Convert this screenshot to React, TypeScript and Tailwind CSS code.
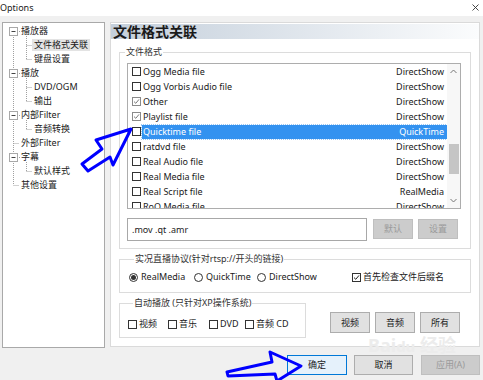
import React from "react";

const FONT = "font-['Noto_Sans','Noto_Sans_CJK_SC',sans-serif]";

function Check({ checked = false, dim = false }: { checked?: boolean; dim?: boolean }) {
  return (
    <span
      className={`relative inline-block w-[9px] h-[9px] shrink-0 border bg-white ${
        dim ? "border-[#8a8a8a]" : "border-[#333333]"
      }`}
    >
      {checked && (
        <svg className="absolute left-0 top-0" width="7" height="7" viewBox="0 0 7 7">
          <path
            d="M1 3.6 L2.8 5.3 L6 1.4"
            fill="none"
            stroke={dim ? "#7a7a7a" : "#222"}
            strokeWidth="1"
          />
        </svg>
      )}
    </span>
  );
}

function Radio({ on = false }: { on?: boolean }) {
  return (
    <span className="relative inline-flex w-[9px] h-[9px] shrink-0 rounded-full border border-[#333333] bg-white items-center justify-center">
      {on && <span className="w-[5px] h-[5px] rounded-full bg-[#333333]" />}
    </span>
  );
}

const rows: { name: string; type: string; checked?: boolean; sel?: boolean }[] = [
  { name: "Ogg Media file", type: "DirectShow" },
  { name: "Ogg Vorbis Audio file", type: "DirectShow" },
  { name: "Other", type: "DirectShow", checked: true },
  { name: "Playlist file", type: "DirectShow", checked: true },
  { name: "Quicktime file", type: "QuickTime", sel: true },
  { name: "ratdvd file", type: "DirectShow" },
  { name: "Real Audio file", type: "DirectShow" },
  { name: "Real Media file", type: "DirectShow" },
  { name: "Real Script file", type: "RealMedia" },
  { name: "RoQ Media file", type: "DirectShow" },
];

const tree: { label: string; child?: boolean; sel?: boolean }[] = [
  { label: "播放器" },
  { label: "文件格式关联", child: true, sel: true },
  { label: "键盘设置", child: true },
  { label: "播放" },
  { label: "DVD/OGM", child: true },
  { label: "输出", child: true },
  { label: "内部Filter" },
  { label: "音频转换", child: true },
  { label: "外部Filter" },
  { label: "字幕" },
  { label: "默认样式", child: true },
  { label: "其他设置" },
];

function TreeLines() {
  const cy = (i: number) => 8 + 14 * i;
  const boxes = [0, 3, 6, 9];
  const leaves = [8, 11];
  const childGroups: [number, number][] = [
    [0, 2],
    [3, 5],
    [6, 7],
    [9, 10],
  ];
  const dash = "1 1";
  const c = "#a0a0a0";
  return (
    <svg className="absolute left-0 top-0 pointer-events-none" width="101" height="200">
      <line x1="10.5" y1={cy(0)} x2="10.5" y2={cy(11)} stroke={c} strokeDasharray={dash} />
      {leaves.map((i) => (
        <line key={"l" + i} x1="10.5" y1={cy(i) + 0.5} x2="16" y2={cy(i) + 0.5} stroke={c} strokeDasharray={dash} />
      ))}
      {childGroups.map(([p, last]) => (
        <g key={"g" + p}>
          <line x1="23.5" y1={cy(p) + 5} x2="23.5" y2={cy(last)} stroke={c} strokeDasharray={dash} />
          {Array.from({ length: last - p }, (_, k) => p + 1 + k).map((i) => (
            <line key={"c" + i} x1="23.5" y1={cy(i) + 0.5} x2="29" y2={cy(i) + 0.5} stroke={c} strokeDasharray={dash} />
          ))}
        </g>
      ))}
      {boxes.map((i) => (
        <g key={"b" + i}>
          <line x1="14" y1={cy(i) + 0.5} x2="17" y2={cy(i) + 0.5} stroke={c} strokeDasharray={dash} />
          <rect x="6.5" y={cy(i) - 3.5} width="8" height="8" fill="#fff" stroke="#a8a8a8" />
          <line x1="8.5" y1={cy(i) + 0.5} x2="12.5" y2={cy(i) + 0.5} stroke="#444" />
        </g>
      ))}
    </svg>
  );
}

function Btn({ children, w, disabled = false }: { children: React.ReactNode; w: string; disabled?: boolean }) {
  return (
    <div
      className={`${w} flex items-center justify-center border text-[9px] ${
        disabled
          ? "bg-[#cccccc] border-[#bfbfbf] text-[#9a9a9a]"
          : "bg-[#e1e1e1] border-[#adadad] text-[#1a1a1a]"
      }`}
    >
      {children}
    </div>
  );
}

export default function App() {
  return (
    <div className={`relative w-[483px] h-[380px] bg-[#f0f0f0] overflow-hidden text-[#1a1a1a] ${FONT}`}>
      {/* title bar */}
      <div className="h-[16px] bg-white flex items-center justify-between pr-[4px]">
        <span className="text-[9px] leading-none pl-[0px] -mt-[2px]">Options</span>
        <svg width="7" height="7" viewBox="0 0 7 7" className="-mt-[2px]">
          <path d="M0.5 0.5 L6.5 6.5 M6.5 0.5 L0.5 6.5" stroke="#333" strokeWidth="0.9" />
        </svg>
      </div>

      {/* main area */}
      <div className="flex items-start">
        {/* tree */}
        <div className="relative ml-[2px] mt-[6px] w-[103px] h-[326px] bg-white border border-[#a9a9a9]">
          <TreeLines />
          <div className="relative pt-[1px]">
            {tree.map((t) => (
              <div key={t.label} className={`h-[14px] flex items-center text-[9px] ${t.child ? "pl-[29px]" : "pl-[16px]"}`}>
                <span className={`px-[2px] leading-[12px] ${t.sel ? "bg-[#e3e3e3]" : ""}`}>{t.label}</span>
              </div>
            ))}
          </div>
        </div>

        {/* right panel */}
        <div className="ml-[5px] mt-[6px] w-[370px] h-[325px] bg-white border border-[#dadada] flex flex-col">
          <div className="mt-[1px] h-[15px] bg-linear-to-r from-[#c4cfdb] to-[#fbfcfd] pl-[2px] text-[14px] font-bold leading-[15px]">
            文件格式关联
          </div>

          {/* group 1 */}
          <fieldset className="mt-[7px] mx-[8px] border border-[#dcdcdc] pb-[7px]">
            <legend className="ml-[5px] px-[1px] text-[9px] leading-[12px] text-[#333]">文件格式</legend>
            <div className="ml-[7px] mt-[5px] w-[334px] h-[146px] border border-[#adadad] flex overflow-hidden">
              <div className="flex-1 flex flex-col">
                {rows.map((r) => (
                  <div key={r.name} className="h-[15px] shrink-0 flex items-center pl-[4px]">
                    <Check checked={r.checked} dim={r.checked} />
                    <div
                      className={`ml-[1px] flex-1 h-[14px] flex items-center justify-between pl-[1px] pr-[3px] text-[9px] ${
                        r.sel ? "bg-[#3392f0] text-white outline outline-dotted outline-[#9cc8f5]" : ""
                      }`}
                    >
                      <span>{r.name}</span>
                      <span>{r.type}</span>
                    </div>
                  </div>
                ))}
              </div>
              <div className="w-[13px] bg-[#f7f7f7] flex flex-col items-center">
                <svg width="7" height="5" viewBox="0 0 7 5" className="mt-[5px]">
                  <path d="M0.5 4 L3.5 1 L6.5 4" fill="none" stroke="#777" strokeWidth="1" />
                </svg>
                <div className="mt-[70px] w-[10px] h-[30px] bg-[#c5c5c5]" />
                <div className="flex-1" />
                <svg width="7" height="5" viewBox="0 0 7 5" className="mb-[5px]">
                  <path d="M0.5 1 L3.5 4 L6.5 1" fill="none" stroke="#777" strokeWidth="1" />
                </svg>
              </div>
            </div>
            <div className="flex items-start mt-[9px] ml-[7px]">
              <div className="w-[240px] h-[23px] border border-[#a8a8a8] bg-white flex items-center pl-[4px] text-[9px]">
                .mov .qt .amr
              </div>
              <div className="ml-[6px] mt-[1px] h-[20px] flex">
                <Btn w="w-[40px]" disabled>默认</Btn>
              </div>
              <div className="ml-[5px] mt-[1px] h-[20px] flex">
                <Btn w="w-[40px]" disabled>设置</Btn>
              </div>
            </div>
          </fieldset>

          {/* group 2 */}
          <fieldset className="mt-[4px] mx-[8px] border border-[#dcdcdc] pt-[5px] pb-[8px] pl-[9px]">
            <legend className="ml-[5px] px-[1px] text-[9px] leading-[12px] text-[#333]">
              实况直播协议(针对rtsp://开头的链接)
            </legend>
            <div className="h-[14px] flex items-center text-[9px]">
              <div className="w-[65px] flex items-center">
                <Radio on />
                <span className="ml-[3px]">RealMedia</span>
              </div>
              <div className="w-[63px] flex items-center">
                <Radio />
                <span className="ml-[3px]">QuickTime</span>
              </div>
              <div className="w-[95px] flex items-center">
                <Radio />
                <span className="ml-[3px]">DirectShow</span>
              </div>
              <div className="flex items-center">
                <Check checked />
                <span className="ml-[2px]">首先检查文件后缀名</span>
              </div>
            </div>
          </fieldset>

          {/* group 3 */}
          <div className="mt-[4px] flex items-start">
            <fieldset className="ml-[8px] w-[187px] border border-[#dcdcdc] pt-[8px] pb-[6px] pl-[8px]">
              <legend className="ml-[5px] px-[1px] text-[9px] leading-[12px] text-[#333]">
                自动播放 (只针对XP操作系统)
              </legend>
              <div className="h-[14px] flex items-center text-[9px]">
                <div className="w-[40px] flex items-center">
                  <Check />
                  <span className="ml-[2px]">视频</span>
                </div>
                <div className="w-[41px] flex items-center">
                  <Check />
                  <span className="ml-[2px]">音乐</span>
                </div>
                <div className="w-[36px] flex items-center">
                  <Check />
                  <span className="ml-[2px]">DVD</span>
                </div>
                <div className="flex items-center">
                  <Check />
                  <span className="ml-[2px]">音频 CD</span>
                </div>
              </div>
            </fieldset>
            <div className="ml-[24px] mt-[15px] h-[21px] flex gap-[5px]">
              <Btn w="w-[40px]">视频</Btn>
              <Btn w="w-[40px]">音频</Btn>
              <Btn w="w-[40px]">所有</Btn>
            </div>
          </div>
        </div>
      </div>

      {/* bottom buttons */}
      <div className="mt-[7px] h-[20px] flex justify-end pr-[3px]">
        <div className="w-[60px] flex items-center justify-center border border-[#0078d7] bg-[#e5f1fb] text-[9px]">确定</div>
        <div className="ml-[7px] flex">
          <Btn w="w-[59px]">取消</Btn>
        </div>
        <div className="ml-[8px] flex">
          <Btn w="w-[59px]" disabled>应用(A)</Btn>
        </div>
      </div>

      {/* faint watermark */}
      <div className="absolute left-[368px] top-[336px] text-[18px] font-bold text-[#ececec] pointer-events-none leading-none">
        Bai<span className="text-[15px]">du</span> 经验
      </div>

      {/* blue annotation arrows */}
      <svg className="absolute left-0 top-0 pointer-events-none" width="483" height="380" viewBox="0 0 483 380">
        <polygon
          points="131,129 96,140 102,149 82,164 88,171 110,157 113,165"
          fill="none"
          stroke="#0000ff"
          strokeWidth="3"
          strokeLinejoin="round"
        />
        <polygon
          points="227,372 272,362 270,352 301,366 277,381 275,374 228,376"
          fill="none"
          stroke="#0000ff"
          strokeWidth="3"
          strokeLinejoin="round"
        />
      </svg>
    </div>
  );
}
